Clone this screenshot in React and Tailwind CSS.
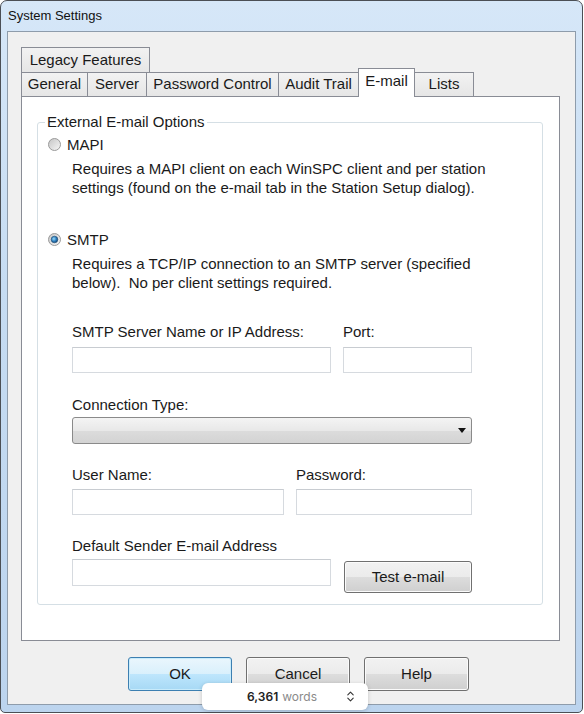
import React from 'react';
import { ChevronsUpDown } from 'lucide-react';

const btnGray =
  'border border-[#707070] rounded-[3px] bg-[linear-gradient(#f2f2f2,#ebebeb_50%,#dddddd_50%,#cfcfcf)] shadow-[inset_0_0_0_1px_#fbfbfb]';
const btnBlue =
  'border border-[#3c7fb1] rounded-[3px] bg-[linear-gradient(#eaf6fd,#d9f0fc_50%,#bee6fd_50%,#a7d9f5)] shadow-[inset_0_0_0_1px_#c8ebfb]';
const inputCls = 'h-[26px] bg-white border border-[#d6dadf] border-t-[#c8ccd1]';

const Radio = ({ checked }) => (
  <svg width="13" height="13" viewBox="0 0 13 13" className="shrink-0">
    <defs>
      <linearGradient id={checked ? 'rg1' : 'rg0'} x1="0" y1="0" x2="1" y2="1">
        <stop offset="0" stopColor="#c4c4c4" />
        <stop offset="1" stopColor="#f8f8f8" />
      </linearGradient>
      <radialGradient id="dot" cx="0.4" cy="0.4" r="0.6">
        <stop offset="0" stopColor="#9fdcf9" />
        <stop offset="0.6" stopColor="#2c7fc0" />
        <stop offset="1" stopColor="#1a4f80" />
      </radialGradient>
    </defs>
    <circle cx="6.5" cy="6.5" r="6" fill={`url(#${checked ? 'rg1' : 'rg0'})`} stroke="#9a9a9a" />
    {checked && <circle cx="6.5" cy="6.5" r="3.3" fill="url(#dot)" stroke="#1d4a72" strokeWidth="0.6" />}
  </svg>
);

const Tab = ({ label, w, selected, first }) => (
  <div
    className={`${w} ${first ? '' : '-ml-px'} flex items-center justify-center border-l border-t border-r border-[#898c95] ${
      selected ? 'h-[29px] -mb-px bg-white relative z-10 pb-[3px]' : 'h-full bg-[linear-gradient(#f2f2f2,#e6e6e6)]'
    }`}
  >
    {label}
  </div>
);

export default function App() {
  return (
    <div className="w-[584px] h-[714px] bg-white relative text-[15px] text-[#1a1a1a] font-['Liberation_Sans',Arial,sans-serif]">
      {/* window frame */}
      <div className="w-[583px] h-[713px] border border-[#4b4f55] rounded-t-[7px] rounded-b-[5px] bg-[linear-gradient(#d6e7f8,#c6dcf2_40%,#bcd4ee)] flex flex-col px-[6px] pb-[7px]">
        <div className="h-[30px] flex items-center pl-[1px] text-[13px] text-[#111]">System Settings</div>

        {/* client area */}
        <div className="flex-1 border border-[#8e9cab] bg-[#f0f0f0] flex flex-col pl-[13px] pr-[15px] pt-[15px]">
          {/* tabs */}
          <div className="h-[25px] flex">
            <div className="w-[129px] h-full flex items-center justify-center border-l border-t border-r border-[#898c95] bg-[linear-gradient(#f2f2f2,#e6e6e6)]">
              Legacy Features
            </div>
          </div>
          <div className="h-[24px] flex items-end">
            <Tab first label="General" w="w-[67px]" />
            <Tab label="Server" w="w-[60px]" />
            <Tab label="Password Control" w="w-[133px]" />
            <Tab label="Audit Trail" w="w-[81px]" />
            <Tab selected label="E-mail" w="w-[57px]" />
            <Tab label="Lists" w="w-[60px]" />
          </div>

          {/* tab panel */}
          <div className="h-[545px] border border-[#898c95] bg-white pl-[15px] pr-[16px] pt-[15px]">
            <fieldset className="border border-[#d5dfe5] rounded-[3px] h-[493px] pl-[10px]">
              <legend className="ml-[-3px] px-[2px] leading-[20px]">External E-mail Options</legend>

              <div className="flex items-center gap-[6px] leading-[19px] mt-[3px]">
                <Radio />
                <span>MAPI</span>
              </div>
              <div className="ml-[24px] mt-[5px] leading-[19px]">
                Requires a MAPI client on each WinSPC client and per station
                <br />
                settings (found on the e-mail tab in the Station Setup dialog).
              </div>

              <div className="flex items-center gap-[6px] leading-[19px] mt-[33px]">
                <Radio checked />
                <span>SMTP</span>
              </div>
              <div className="ml-[24px] mt-[5px] leading-[19px]">
                Requires a TCP/IP connection to an SMTP server (specified
                <br />
                below).&nbsp; No per client settings required.
              </div>

              <div className="ml-[24px] flex flex-col">
                <div className="flex gap-[12px] mt-[30px]">
                  <div className="w-[259px] flex flex-col">
                    <span className="leading-[19px]">SMTP Server Name or IP Address:</span>
                    <div className={`${inputCls} mt-[6px]`} />
                  </div>
                  <div className="w-[129px] flex flex-col">
                    <span className="leading-[19px]">Port:</span>
                    <div className={`${inputCls} mt-[6px]`} />
                  </div>
                </div>

                <span className="leading-[19px] mt-[22px]">Connection Type:</span>
                <div className="w-[400px] h-[27px] mt-[3px] border border-[#8a8a8a] rounded-[3px] bg-[linear-gradient(#f4f4f4,#e8e8e8_50%,#dcdcdc_50%,#d3d3d3)] flex items-center justify-end pr-[5px]">
                  <svg width="8" height="5" viewBox="0 0 8 5">
                    <path d="M0 0 H8 L4 5 Z" fill="#111" />
                  </svg>
                </div>

                <div className="flex gap-[12px] mt-[21px]">
                  <div className="w-[212px] flex flex-col">
                    <span className="leading-[19px]">User Name:</span>
                    <div className={`${inputCls} mt-[5px]`} />
                  </div>
                  <div className="w-[176px] flex flex-col">
                    <span className="leading-[19px]">Password:</span>
                    <div className={`${inputCls} mt-[5px]`} />
                  </div>
                </div>

                <span className="leading-[19px] mt-[21px]">Default Sender E-mail Address</span>
                <div className="flex gap-[13px] mt-[4px] items-start">
                  <div className={`${inputCls} w-[259px] h-[27px]`} />
                  <div className={`${btnGray} w-[128px] h-[32px] mt-[2px] flex items-center justify-center`}>
                    Test e-mail
                  </div>
                </div>
              </div>
            </fieldset>
          </div>

          {/* dialog buttons */}
          <div className="flex gap-[14px] mt-[16px] pl-[107px]">
            <div className={`${btnBlue} w-[104px] h-[34px] flex items-center justify-center`}>OK</div>
            <div className={`${btnGray} w-[104px] h-[34px] flex items-center justify-center`}>Cancel</div>
            <div className={`${btnGray} w-[105px] h-[34px] flex items-center justify-center`}>Help</div>
          </div>
        </div>
      </div>

      {/* word count overlay */}
      <div className="absolute left-[202px] top-[683px] w-[166px] h-[27px] rounded-[6px] bg-white shadow-[0_1px_4px_rgba(0,0,0,0.18)] flex items-center pl-[45px] pr-[11px] text-[12px] font-['Inter',sans-serif]">
        <span className="font-semibold text-[#222]">6,361</span>
        <span className="ml-[4px] text-[#8a8a8a]">words</span>
        <ChevronsUpDown className="ml-auto w-[13px] h-[13px] text-[#333]" strokeWidth={2} />
      </div>
    </div>
  );
}
